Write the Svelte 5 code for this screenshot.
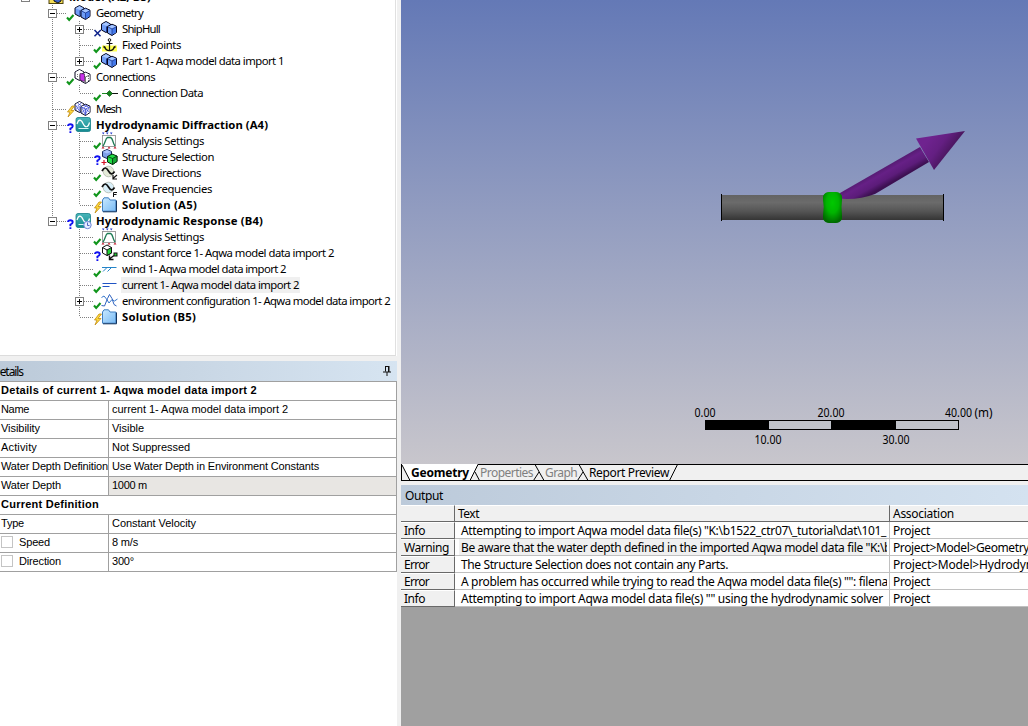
<script>
  // Tightens or loosens letter spacing so a label takes exactly `width` pixels.
  function fit(node, width) {
    const natural = node.getBoundingClientRect().width;
    node.style.letterSpacing = `${(width - natural) / node.textContent.length}px`;
  }

  const tree = [
    { d: 1, box: '-', s: 'ok', icon: 'geo', t: 'Geometry', w: 47 },
    { d: 2, box: '+', s: 'x', icon: 'geo', t: 'ShipHull', w: 38 },
    { d: 2, s: 'ok', icon: 'anchor', t: 'Fixed Points', w: 59 },
    { d: 2, box: '+', s: 'ok', icon: 'geo', t: 'Part 1- Aqwa model data import 1', w: 162, last: true },
    { d: 1, box: '-', s: 'ok', icon: 'conn', t: 'Connections', w: 59 },
    { d: 2, s: 'ok', icon: 'link', t: 'Connection Data', w: 81, last: true },
    { d: 1, s: 'bolt', icon: 'mesh', t: 'Mesh', w: 25 },
    { d: 1, box: '-', s: 'q', icon: 'hydro', t: 'Hydrodynamic Diffraction (A4)', w: 172, b: true },
    { d: 2, s: 'ok', icon: 'analysis', t: 'Analysis Settings', w: 82 },
    { d: 2, s: 'q', icon: 'structure', t: 'Structure Selection', w: 92 },
    { d: 2, s: 'ok', icon: 'wavedir', t: 'Wave Directions', w: 79 },
    { d: 2, s: 'ok', icon: 'wavefreq', t: 'Wave Frequencies', w: 90 },
    { d: 2, s: 'bolt', icon: 'folder', t: 'Solution (A5)', w: 75, b: true, last: true },
    { d: 1, box: '-', s: 'q', icon: 'hydrotime', t: 'Hydrodynamic Response (B4)', w: 167, b: true, end: true },
    { d: 2, s: 'ok', icon: 'analysis', t: 'Analysis Settings', w: 82 },
    { d: 2, s: 'q', icon: 'force', t: 'constant force 1- Aqwa model data import 2', w: 212 },
    { d: 2, s: 'ok', icon: 'wind', t: 'wind 1- Aqwa model data import 2', w: 164 },
    { d: 2, s: 'ok', icon: 'current', t: 'current 1- Aqwa model data import 2', w: 177, sel: true },
    { d: 2, box: '+', s: 'ok', icon: 'env', t: 'environment configuration 1- Aqwa model data import 2', w: 268 },
    { d: 2, s: 'bolt', icon: 'folder', t: 'Solution (B5)', w: 74, b: true, last: true }
  ];
  const endIndex = tree.findIndex((r) => r.end);

  const details = [
    { head: 'Details of current 1- Aqwa model data import 2', w: 256 },
    { k: 'Name', kw: 28, v: 'current 1- Aqwa model data import 2', w: 176 },
    { k: 'Visibility', kw: 39, v: 'Visible', w: 32 },
    { k: 'Activity', kw: 36, v: 'Not Suppressed', w: 78 },
    { k: 'Water Depth Definition', kw: 107, v: 'Use Water Depth in Environment Constants', w: 207 },
    { k: 'Water Depth', kw: 60, v: '1000 m', w: 35, ro: true },
    { head: 'Current Definition', w: 98 },
    { k: 'Type', kw: 23, v: 'Constant Velocity', w: 84 },
    { k: 'Speed', kw: 31, v: '8 m/s', w: 26, cb: true },
    { k: 'Direction', kw: 42, v: '300°', w: 22, cb: true }
  ];

  const output = [
    { k: 'Info', kw: 21, t: 'Attempting to import Aqwa model data file(s) "K:\\b1522_ctr07\\_tutorial\\dat\\101_', w: 425, a: 'Project', aw: 37 },
    { k: 'Warning', kw: 45, t: 'Be aware that the water depth defined in the imported Aqwa model data file "K:\\b', w: 430, a: 'Project>Model>Geometry', aw: 136, hl: true },
    { k: 'Error', kw: 25, t: 'The Structure Selection does not contain any Parts.', w: 267, a: 'Project>Model>Hydrodyn', aw: 140 },
    { k: 'Error', kw: 25, t: 'A problem has occurred while trying to read the Aqwa model data file(s) "": filena', w: 427, a: 'Project', aw: 37 },
    { k: 'Info', kw: 21, t: 'Attempting to import Aqwa model data file(s) "" using the hydrodynamic solver', w: 422, a: 'Project', aw: 37 }
  ];
</script>

{#snippet cubes(fill, side, top, inner)}
  <path d="M-.5 3 L4 .5 L8.500 3 V9 L4 11.500 L-.5 9Z" fill={fill} stroke="#05051e" />
  <path d="M0 3.300 L4 1.200 L8 3.300 L4.500 5Z" fill={top} />
  <path d="M4.500 5.500V11" stroke={inner} />
  <path d="M5.500 5.500 L10 3.200 L14.500 5.200 V11.500 L10 14.500 L5.500 12Z" fill={fill} stroke="#05051e" />
  <path d="M10 8 L14 5.900 V11.200 L10 13.800Z" fill={side} />
  <path d="M6.200 5.700 L10 3.900 L13.900 5.500 L10 7.500Z" fill={top} />
  <path d="M6 6L10 8L14 6M10 8V14" fill="none" stroke={inner} stroke-width=".8" />
{/snippet}

{#snippet glyph(name)}
  {#if name === 'geo'}
    {@render cubes('#709df6', '#4479ea', '#a5c5ff', '#1c3890')}
  {:else if name === 'conn'}
    {@render cubes('#fff', '#fff', '#fff', '#555')}
    <path d="M4.500 4.500L9 5V12.500L4.500 11Z" fill="#c930ea" stroke="#31103c" stroke-width=".6" />
    <path d="M2 5V9M13 7V12" stroke="#777" stroke-dasharray="1 1" />
  {:else if name === 'mesh'}
    {@render cubes('#fff', '#fff', '#fff', '#3544c9')}
    <path d="M0 4l4 6M4 5L0 9M6 6l4 8M10 8l-4 4M10 8l4 3M14 6l-4 7M2 2l4 3M6 2l-4 3M8 4l5 2M12 4l-4 3" stroke="#3c4cdc" stroke-width=".8" fill="none" />
  {:else if name === 'anchor'}
    <rect y="8.500" x="0" width="15" height="6" fill="#ffff52" />
    <path d="M7.500 4V13M4.500 6.500h6M2.500 9.500q1 4 5 4.200q4-.2 5-4.200" stroke="#111" stroke-width="1.200" fill="none" />
    <path d="M1.500 11V8.500L4 10.500ZM13.500 11V8.500L11 10.500Z" fill="#111" />
    <circle cx="7.500" cy="3" r="1.300" fill="#fff" stroke="#111" />
  {:else if name === 'link'}
    <path d="M0 8.500H8" stroke="#1e8a25" /><path d="M8 8.500h8" stroke="#111" />
    <path d="M7.500 5.500l3 3l-3 3l-3-3Z" fill="#108418" stroke="#063b09" stroke-width=".6" />
  {:else if name === 'hydro' || name === 'hydrotime'}
    <rect x=".5" y=".5" width="14.500" height="14" rx="2" fill="url(#teal)" stroke="#147f88" stroke-width=".8" />
    <path d="M1.500 7C3 2 5.500 2 7.500 6.500S12.500 11 14 5.500" fill="none" stroke="#fff" stroke-width="1.200" />
    <path d="M3 11.500h10" stroke="#d9f5f4" />
    {#if name === 'hydrotime'}
      <circle cx="12" cy="12" r="3.700" fill="#e7efff" stroke="#6c85d8" />
      <path d="M12 9.500V12.500H14" stroke="#4f67c4" fill="none" />
    {/if}
  {:else if name === 'analysis'}
    <rect x=".5" y="2.500" width="13" height="11" fill="#fff" stroke="#888" stroke-width=".8" />
    <path d="M1 13C3.500 10 3.500 5 5.500 4.500H8.500C11 5 10.500 10 13 13" fill="none" stroke="#1e7b55" stroke-width="1.300" />
    <path d="M0 -.5h2.500l-1.250 2zM4 -.5h2.500l-1.250 2zM8 -.5h2.500l-1.250 2z" fill="#2036cc" />
    <path d="M-.5 15.500h3L1 13.500zM5.500 15.500h3L7 13.500zM11.500 15.500h3l-1.500-2z" fill="#c31526" />
  {:else if name === 'structure'}
    <path d="M.5 2.500L5 .5L9.500 2.500V7.500L5 9.500L.5 7.500Z" fill="#7e9fe8" stroke="#17285c" />
    <path d="M1 2.700L5 1.100L9 2.700L5 4.500Z" fill="#a9c3ff" />
    <path d="M5.500 7.500L10 5L15 7V12.500L10.500 15.500L5.500 13Z" fill="#21dc45" stroke="#052b0b" />
    <path d="M10.500 9.500L15 7V12.500L10.500 15.500Z" fill="#12a831" stroke="#052b0b" stroke-width=".8" />
    <path d="M5.500 7.500L10.500 9.500" fill="none" stroke="#052b0b" stroke-width=".8" />
    <path d="M-.5 13.500h5M2 11v5" stroke="#d31224" stroke-width="1.200" />
  {:else if name === 'wavedir' || name === 'wavefreq'}
    <circle cx="6.500" cy="6.500" r="5.300" fill={name === 'wavedir' ? '#e4ead8' : '#d8eef8'} stroke="#b1b9ae" stroke-width=".8" />
    <path d="M0 6C2.500 1.500 4.500 2.500 6.500 6S10.500 10 12.500 6.500" stroke="#111" stroke-width="1.700" fill="none" />
    {#if name === 'wavedir'}
      <path d="M15 10L11.500 13M11 10v4h4" stroke="#111" stroke-width="1.200" fill="none" />
    {:else}
      <path d="M11.500 16V11.500H15M11.500 13.500h3" stroke="#111" fill="none" />
    {/if}
  {:else if name === 'folder'}
    <path d="M.5 3L2 .8H6.500L8 3H13.800V14.200H.5Z" fill="url(#folder)" stroke="#3f7fc2" />
    <path d="M1 14.800H14.500V3.500" stroke="#12335c" fill="none" />
  {:else if name === 'force'}
    <path d="M.5 2.500L5 0L9.500 2.500V8L5 10.500L.5 8Z" fill="#fff" stroke="#111" />
    <path d="M5 5L9.500 2.500V8L5 10.500Z" fill="#24d438" stroke="#111" />
    <path d="M.5 2.500L5 5" stroke="#111" />
    <path d="M12 10.500L8 13.500M7.500 10.500v4h4" stroke="#111" stroke-width="1.400" fill="none" />
    <rect x="12" y="8" width="3" height="3" fill="#24d438" stroke="#111" />
  {:else if name === 'wind'}
    <path d="M0 6.500H14.500M1 10.500l4-4M5.500 10.500l4-4" stroke="#2484c8" fill="none" />
  {:else if name === 'current'}
    <path d="M.5 6.500H14.500M.5 9.500H7.500" stroke="#2054c4" fill="none" />
  {:else if name === 'env'}
    <path d="M-.5 4.500L2 3L4.500 6L7 10L10 6.500L12.500 8L15.500 6" stroke="#3677cc" fill="none" />
    <path d="M-.5 12.500L2.500 13L5.500 5.500L7.500 1.500L10 5.500L12 11.500L14.500 13" stroke="#3164c0" fill="none" />
  {:else if name === 'model'}
    <rect x="0" y="1" width="14" height="13.500" fill="#f3dc55" stroke="#4e430e" />
    <path d="M5 8v4l4 2l3-2V8" fill="#3c64c8" stroke="#111" />
  {/if}
{/snippet}

{#snippet state(name)}
  {#if name === 'ok'}
    <path d="M.5 12L2.700 14.500L7 9.500" fill="none" stroke="#10951b" stroke-width="2.100" />
  {:else if name === 'x'}
    <path d="M1 8.500L7 14.800M7.300 8.500L1 14.800" stroke="#10248c" stroke-width="1.500" />
  {:else if name === 'q'}
    <path d="M1.500 8.500Q1.700 6.800 3.800 6.800Q6.200 6.800 6.200 8.700Q6.200 10 3.900 11V12.800M3.900 13.700V15.500" fill="none" stroke="#1010f0" stroke-width="1.900" />
  {:else}
    <path d="M5.500 4.500L1 10.500H3.500L1.500 15.500L7.500 9H4.500L8 4.500Z" fill="#ffdb3c" stroke="#c28b12" stroke-width=".8" />
  {/if}
{/snippet}

<svg class="defs" width="0" height="0" aria-hidden="true">
  <defs>
    <linearGradient id="teal" x1="0" y1="0" x2="0" y2="1"><stop offset="0" stop-color="#48b5b8" /><stop offset="1" stop-color="#148b91" /></linearGradient>
    <linearGradient id="folder" x1="0" y1="0" x2="1" y2="1"><stop offset="0" stop-color="#c9e9ff" /><stop offset="1" stop-color="#78baf4" /></linearGradient>
  </defs>
</svg>

<div class="app">
  <div class="left">
    <div class="tree">
      <div class="row root">
        <svg width="69" height="16">
          <g shape-rendering="crispEdges">
            <rect x="21.500" y="3.500" width="8" height="9" fill="#fff" stroke="#808080" />
            <path d="M52.500 14v2" stroke="#808080" stroke-dasharray="1 1" />
          </g>
          <g transform="translate(49 0)">{@render glyph('model')}</g>
        </svg>
        <b class="label" use:fit={82}>Model (A2, B3)</b>
      </div>
      {#each tree as r, i}
        {@const x = r.d === 1 ? 52.5 : 79.5}
        {@const s = r.d === 1 ? 67 : 94}
        <div class="row">
          <svg width={r.d === 1 ? 96 : 122} height="16">
            <g stroke="#808080" fill="none" shape-rendering="crispEdges">
              <g stroke-dasharray="1 1">
                {#if i <= endIndex}<path d="M52.500 0V{r.end ? 8 : 16}" />{/if}
                {#if r.d === 2}<path d="M79.500 0V{r.last ? 8 : 16}" />{/if}
                <path d="M{x + 0.5} 8.500H{s}" />
              </g>
              {#if r.box}
                <rect x={x - 4} y="4.500" width="8" height="8" fill="#fff" />
                <path d="M{x - 2.5} 8.500h5{r.box === '+' ? `M${x} 6v5` : ''}" stroke="#000" />
              {/if}
            </g>
            <g transform="translate({r.d === 1 ? 75.5 : 102} 0)">{@render glyph(r.icon)}</g>
            <g transform="translate({s - 0.5} .5)">{@render state(r.s)}</g>
          </svg>
          <span class="label" class:bold={r.b} class:sel={r.sel} use:fit={r.w}>{r.t}</span>
        </div>
      {/each}
    </div>
    <div class="dhead">
      <span use:fit={31}>Details</span>
      <svg width="8" height="12"><path d="M2.500 1V6.500M2 1.500H6M5.500 1V6.500M0 7H8M4 7V11" stroke="#111" fill="none" /><path d="M5 1h1.500v6H5z" fill="#111" /></svg>
    </div>
    <div class="dtable">
      {#each details as r}
        <div class="drow">
          {#if r.head}
            <div class="full"><span use:fit={r.w}>{r.head}</span></div>
          {:else}
            <div class="key">{#if r.cb}<i></i>{/if}<span use:fit={r.kw}>{r.k}</span></div>
            <div class="val" class:ro={r.ro}><span use:fit={r.w}>{r.v}</span></div>
          {/if}
        </div>
      {/each}
    </div>
  </div>

  <div class="right">
    <svg class="view" width="627" height="464" viewBox="401 0 627 464">
      <defs>
        <linearGradient id="sky" x1="0" y1="0" x2="0" y2="1"><stop offset="0" stop-color="#6479b6" /><stop offset="1" stop-color="#c8c6cc" /></linearGradient>
        <linearGradient id="hull" x1="0" y1="0" x2="0" y2="1"><stop offset="0" stop-color="#636363" /><stop offset=".3" stop-color="#6b6b6b" /><stop offset=".65" stop-color="#555" /><stop offset="1" stop-color="#353535" /></linearGradient>
        <radialGradient id="ring" cx=".5" cy=".35" r=".65"><stop offset="0" stop-color="#00c800" /><stop offset=".5" stop-color="#00b400" /><stop offset="1" stop-color="#006a00" /></radialGradient>
        <linearGradient id="shaft" gradientUnits="userSpaceOnUse" x1="885" y1="165" x2="894" y2="181"><stop offset="0" stop-color="#501a6c" /><stop offset=".35" stop-color="#662086" /><stop offset=".7" stop-color="#5c1c7a" /><stop offset="1" stop-color="#3d1052" /></linearGradient>
        <linearGradient id="cone" gradientUnits="userSpaceOnUse" x1="926" y1="142" x2="948" y2="158"><stop offset="0" stop-color="#6f238f" /><stop offset=".5" stop-color="#641f82" /><stop offset="1" stop-color="#451458" /></linearGradient>
      </defs>
      <rect x="401" width="627" height="464" fill="url(#sky)" />
      <rect x="721" y="195" width="223" height="25" fill="url(#hull)" />
      <path d="M721.500 194V221M943.500 194V221" stroke="#000" />
      <path d="M840 193L920 147L929 162L875 194Q862 199 847 199Q842 199 840 198Z" fill="url(#shaft)" />
      <path d="M916 138.500L965 131L934 170Z" fill="url(#cone)" />
      <path d="M823 196Q825 192 829 192H836Q840 192 842 196V200Q841 207 842 215V219Q840 223 836 223H829Q825 223 823 219V215Q824.500 207 823 200Z" fill="url(#ring)" />
      <g shape-rendering="crispEdges">
        <rect x="705.500" y="420.500" width="253" height="9" fill="#c0c3ca" stroke="#000" />
        <path d="M705 420h64v10h-64zM831 420h65v10h-65z" />
      </g>
      <g class="scale">
        <text x="694.500" y="417" textLength="21" lengthAdjust="spacingAndGlyphs">0.00</text>
        <text x="817.500" y="417" textLength="27" lengthAdjust="spacingAndGlyphs">20.00</text>
        <text x="945" y="417" textLength="27" lengthAdjust="spacingAndGlyphs">40.00</text>
        <text x="974.500" y="417" textLength="18" lengthAdjust="spacingAndGlyphs">(m)</text>
        <text x="754.500" y="444" textLength="27" lengthAdjust="spacingAndGlyphs">10.00</text>
        <text x="882.500" y="444" textLength="27" lengthAdjust="spacingAndGlyphs">30.00</text>
      </g>
    </svg>

    <div class="tabs">
      <svg class="edges" width="290" height="17">
        <path d="M0 0H77L69 16H9Z" fill="#fff" />
        <g fill="none" stroke="#000">
          <path d="M.5 0V17M1 1L9 16.500M69 16.500L77 .5M74 8L78.500 16.500M134 .5L143 16.500M132.500 16.500L138 8M178 .5L187 16.500M176.500 16.500L182 8M268.500 16.500L276.500 .5" />
        </g>
      </svg>
      <b class="tab geometry" use:fit={58}>Geometry</b>
      <span class="tab off properties" use:fit={53}>Properties</span>
      <span class="tab off graph" use:fit={32}>Graph</span>
      <span class="tab" use:fit={80}>Report Preview</span>
    </div>

    <div class="ohead"><span use:fit={38}>Output</span></div>
    <div class="ogrid head">
      <div></div>
      <div><span use:fit={21}>Text</span></div>
      <div><span use:fit={61}>Association</span></div>
    </div>
    {#each output as r}
      <div class="ogrid line">
        <div class="kind"><span use:fit={r.kw}>{r.k}</span></div>
        <div class="msg" class:hl={r.hl}><p><span use:fit={r.w}>{r.t}</span></p></div>
        <div class="assoc"><span use:fit={r.aw}>{r.a}</span></div>
      </div>
    {/each}
    <div class="rest"></div>
  </div>
</div>

<style>
  :global(body) { margin: 0; overflow: hidden; }
  .app { display: flex; width: 1028px; height: 726px; overflow: hidden; background: #f0f0f0; color: #000; font: 12px/16px "Noto Sans", sans-serif; white-space: nowrap; }
  .app span, .app b { flex: none; }
  svg { display: block; flex: none; }
  .defs { position: absolute; }
  .left { width: 401px; display: flex; flex-direction: column; flex: none; background: linear-gradient(90deg, #fff 397px, #f0f0f0 397px); }
  .tree { box-sizing: border-box; width: 396px; height: 356px; overflow: hidden; background: #fff; border-right: 1px solid #e0e0e0; border-bottom: 1px solid #dcdcdc; font-size: 11.3px; }
  .row { display: flex; height: 16px; }
  .row svg { overflow: visible; }
  .root { margin-top: -11px; }
  .label { line-height: 16px; height: 16px; }
  .bold, b { font-weight: 700; }
  .sel { background: #f0f0f0; box-shadow: -1px 0 #f0f0f0, 1px 0 #f0f0f0; }
  .dhead { box-sizing: border-box; width: 397px; height: 25px; margin-right: 4px; padding: 0 6px 0 0; border-top: 5px solid #f0f0f0; display: flex; align-items: center; justify-content: space-between; background: linear-gradient(90deg, #bccad9, #d6e4f1); }
  .dhead span { margin-left: -8px; line-height: 20px; padding-top: 1px; }
  .dtable { box-sizing: border-box; width: 397px; border: solid #a0a0a0; border-width: 1px 1px 0 0; font: 11px/17px "Liberation Sans", Arial, sans-serif; }
  .drow { display: flex; height: 18px; border-bottom: 1px solid #a0a0a0; }
  .full { padding-left: 1px; font-weight: 700; }
  .key { box-sizing: border-box; width: 109px; padding-left: 1px; display: flex; border-right: 1px solid #a0a0a0; overflow: hidden; }
  .key i { box-sizing: border-box; flex: none; width: 12px; height: 12px; margin: 2px 6px 0 0; border: 1px solid #c4c4c4; }
  .val { flex: 1; padding-left: 3px; }
  .ro { background: #e8e6e3; }
  .right { width: 627px; display: flex; flex-direction: column; flex: none; overflow: hidden; }
  .scale { font-size: 12px; }
  .tabs { position: relative; box-sizing: border-box; flex: none; height: 17px; display: flex; border: solid #000; border-width: 1px 0; padding-left: 10px; line-height: 16px; }
  .edges { position: absolute; left: 0; top: -1px; }
  .tab { position: relative; }
  .off { color: #808080; }
  .geometry { margin-right: 11px; }
  .properties { margin-right: 12px; }
  .graph { margin-right: 12px; }
  .ohead { flex: none; height: 20px; margin-top: 4px; padding-left: 4px; line-height: 21px; background: linear-gradient(90deg, #bccada, #d4e2f0); }
  .ogrid { display: grid; grid-template-columns: 54px 435px 138px; flex: none; height: 17px; line-height: 17px; }
  .ogrid > div { box-sizing: border-box; overflow: hidden; border-right: 1px solid #c0c0c0; border-bottom: 1px solid #c0c0c0; background: #fff; padding-left: 3px; }
  .head > div { background: #f0f0f0; border-color: #696969; border-top: 1px solid #fff; line-height: 16px; }
  .ogrid > .kind { background: #f0f0f0; border-color: #696969; border-top: 1px solid #fff; line-height: 15px; }
  .ogrid > .msg { padding: 0 2px 0 4px; }
  .ogrid > div:last-child { border-right: 0; }
  .msg p { margin: 0; padding-left: 2px; overflow: hidden; height: 16px; }
  .msg.hl p { background: #f0f0f0; }
  .rest { flex: 1; background: #a0a0a0; }
</style>
